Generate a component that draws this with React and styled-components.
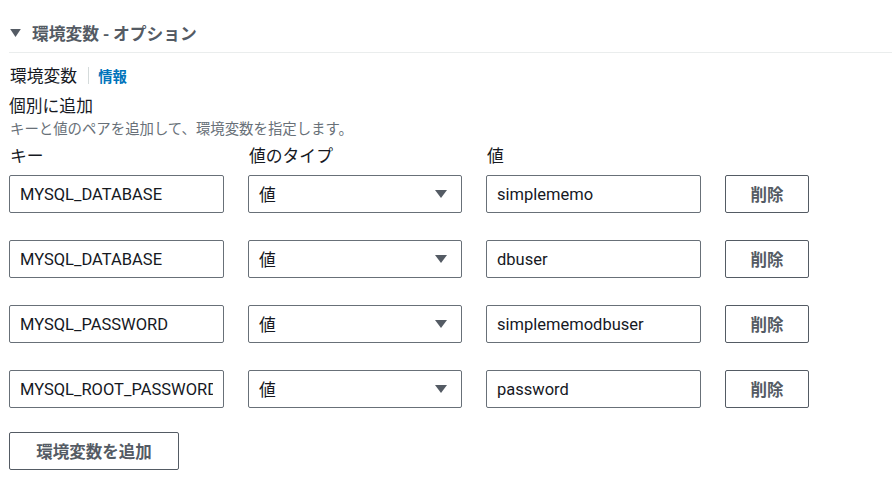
import React from "react";
import styled, { createGlobalStyle } from "styled-components";

const GlobalStyle = createGlobalStyle`
  body {
    margin: 0;
    background: #ffffff;
    font-family: Roboto, "Noto Sans CJK JP", sans-serif;
    color: #16191f;
  }
`;

const envRows = [
  { id: 1, key: "MYSQL_DATABASE", value: "simplememo" },
  { id: 2, key: "MYSQL_DATABASE", value: "dbuser" },
  { id: 3, key: "MYSQL_PASSWORD", value: "simplememodbuser" },
  { id: 4, key: "MYSQL_ROOT_PASSWORD", value: "password" },
];

const App = () => {
  return (
    <Wrapper>
      <GlobalStyle />
      <SectionHeader>
        <Caret viewBox="0 0 12 9">
          <path d="M0 0h12L6 9z" fill="#545b64" />
        </Caret>
        <h2>環境変数 - オプション</h2>
      </SectionHeader>

      <FieldLabel>
        <span>環境変数</span>
        <Divider />
        <InfoLink href="#">情報</InfoLink>
      </FieldLabel>

      <SubTitle>個別に追加</SubTitle>
      <Description>キーと値のペアを追加して、環境変数を指定します。</Description>

      <Columns $labels>
        <ColLabel>キー</ColLabel>
        <ColLabel>値のタイプ</ColLabel>
        <ColLabel>値</ColLabel>
      </Columns>

      <RowList>
        {envRows.map((row) => (
          <Columns key={row.id}>
            <TextInput defaultValue={row.key} />
            <SelectBox>
              <span>値</span>
              <svg width="12" height="8" viewBox="0 0 12 8">
                <path d="M0 0h12L6 8z" fill="#545b64" />
              </svg>
            </SelectBox>
            <TextInput defaultValue={row.value} />
            <Button type="button">削除</Button>
          </Columns>
        ))}
      </RowList>

      <AddButton type="button">環境変数を追加</AddButton>
    </Wrapper>
  );
};

const Wrapper = styled.div`
  padding: 22px 0 0 9px;
  width: 892px;
  box-sizing: border-box;
`;

const SectionHeader = styled.div`
  display: flex;
  align-items: center;
  gap: 11px;
  padding: 0 0 8px 1px;
  border-bottom: 1px solid #eaeded;

  h2 {
    margin: 0;
    font-size: 16.8px;
    line-height: 22px;
    font-weight: 700;
    color: #545b64;
    font-family: "Noto Sans CJK JP", sans-serif;
  }
`;

const Caret = styled.svg`
  width: 11px;
  height: 8px;
`;

const FieldLabel = styled.div`
  display: flex;
  align-items: center;
  margin-top: 11px;
  padding-left: 1px;
  height: 22px;
  font-size: 16.8px;
  font-family: "Noto Sans CJK JP", sans-serif;
`;

const Divider = styled.span`
  width: 1px;
  height: 17px;
  background: #d5dbdb;
  margin: 0 9px 0 11px;
`;

const InfoLink = styled.a`
  color: #0073bb;
  font-weight: 700;
  font-size: 14.4px;
  text-decoration: none;
`;

const SubTitle = styled.div`
  margin-top: 8px;
  font-size: 16.8px;
  line-height: 22px;
  font-family: "Noto Sans CJK JP", sans-serif;
`;

const Description = styled.div`
  margin-top: 3px;
  font-size: 14.4px;
  line-height: 18px;
  color: #687078;
  padding-left: 1px;
  font-family: "Noto Sans CJK JP", sans-serif;
`;

const Columns = styled.div`
  display: grid;
  grid-template-columns: 215px 214px 215px 84px;
  column-gap: 24px;
  height: ${(p) => (p.$labels ? "22px" : "38px")};
  margin: ${(p) => (p.$labels ? "7px 0 9px" : "0")};
`;

const RowList = styled.div`
  display: flex;
  flex-direction: column;
  gap: 27px;
`;

const ColLabel = styled.div`
  font-size: 16.8px;
  line-height: 22px;
  padding-left: 1px;
  font-family: "Noto Sans CJK JP", sans-serif;
`;

const TextInput = styled.input`
  box-sizing: border-box;
  height: 38px;
  width: 100%;
  border: 1px solid #687078;
  border-radius: 2px;
  padding: 0 10px;
  font-family: Roboto, "Noto Sans CJK JP", sans-serif;
  font-size: 16.5px;
  color: #16191f;
  outline: none;
`;

const SelectBox = styled.div`
  box-sizing: border-box;
  height: 38px;
  display: flex;
  align-items: center;
  justify-content: space-between;
  border: 1px solid #687078;
  border-radius: 2px;
  padding: 0 14px 0 10px;
  font-size: 16.8px;
  font-family: "Noto Sans CJK JP", sans-serif;
  color: #16191f;
`;

const Button = styled.button`
  box-sizing: border-box;
  height: 38px;
  background: #ffffff;
  border: 1px solid #545b64;
  border-radius: 2px;
  color: #545b64;
  font-weight: 700;
  font-size: 16.5px;
  font-family: "Noto Sans CJK JP", sans-serif;
  padding: 0;
  cursor: pointer;
`;

const AddButton = styled(Button)`
  margin-top: 24px;
  width: 170px;
`;

export default App;
